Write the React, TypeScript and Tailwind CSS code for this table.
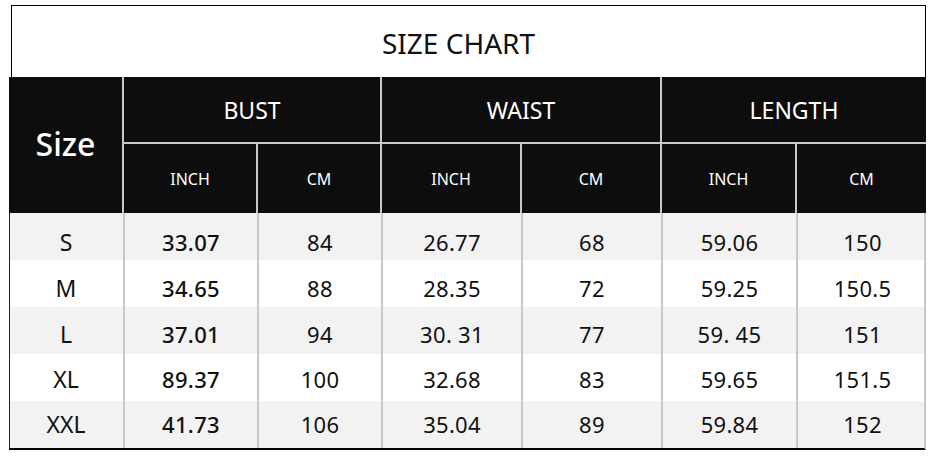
const COLS = 'grid grid-cols-[113px_134px_124px_140px_140px_135px_131px]';

// text in the source image drifts slightly against the row stripes
const rows = [
  { pad: 'pt-[12px]', bg: 'bg-[#f2f2f2]', cells: ['S', '33.07', '84', '26.77', '68', '59.06', '150'] },
  { pad: 'pt-[9px]', bg: 'bg-white', cells: ['M', '34.65', '88', '28.35', '72', '59.25', '150.5'] },
  { pad: 'pt-[7px]', bg: 'bg-[#f2f2f2]', cells: ['L', '37.01', '94', '30. 31', '77', '59. 45', '151'] },
  { pad: 'pt-[3px]', bg: 'bg-white', cells: ['XL', '89.37', '100', '32.68', '83', '59.65', '151.5'] },
  { pad: 'pt-0', bg: 'bg-[#f2f2f2]', cells: ['XXL', '41.73', '106', '35.04', '89', '59.84', '152'] },
];

export default function App() {
  return (
    <div className="w-[936px] h-[463px] bg-white pt-[5px] font-['Noto_Sans',sans-serif] text-[#111]">
      <div className="ml-[11px] w-[915px] h-[72px] border border-b-0 border-black flex items-center justify-center text-[28px] pt-[3px] pr-[20px]">
        SIZE CHART
      </div>

      <div className={`ml-[9px] w-[917px] ${COLS} grid-rows-[67px_69px] bg-[#0d0d0d] text-white`}>
        <div className="row-span-2 flex items-center justify-center text-[32px] font-medium pb-[2px]">Size</div>
        {['BUST', 'WAIST', 'LENGTH'].map((h) => (
          <div key={h} className="col-span-2 border-l-2 border-b-2 border-[#c8c8c8] flex items-center justify-center text-[23px] pt-[2px]">
            {h}
          </div>
        ))}
        {['INCH', 'CM', 'INCH', 'CM', 'INCH', 'CM'].map((h, i) => (
          <div key={i} className="border-l-2 border-[#c8c8c8] flex items-center justify-center text-[16px]">
            {h}
          </div>
        ))}
      </div>

      <div className="ml-[9px] w-[917px] border-l border-[#222] border-r-2 border-r-[#c8c8c8] border-b-2 border-b-black">
        {rows.map((r) => (
          <div key={r.cells[0]} className={`${COLS} h-[47px] ${r.bg}`}>
            {r.cells.map((c, ci) => (
              <div
                key={ci}
                className={`flex items-center justify-center ${r.pad} ${ci === 0 ? 'text-[23px] -ml-px' : 'text-[22px] tracking-[0.3px] border-l-2 border-[#c8c8c8]'} ${ci === 1 ? 'font-medium' : ''}`}
              >
                {c}
              </div>
            ))}
          </div>
        ))}
      </div>
    </div>
  );
}
